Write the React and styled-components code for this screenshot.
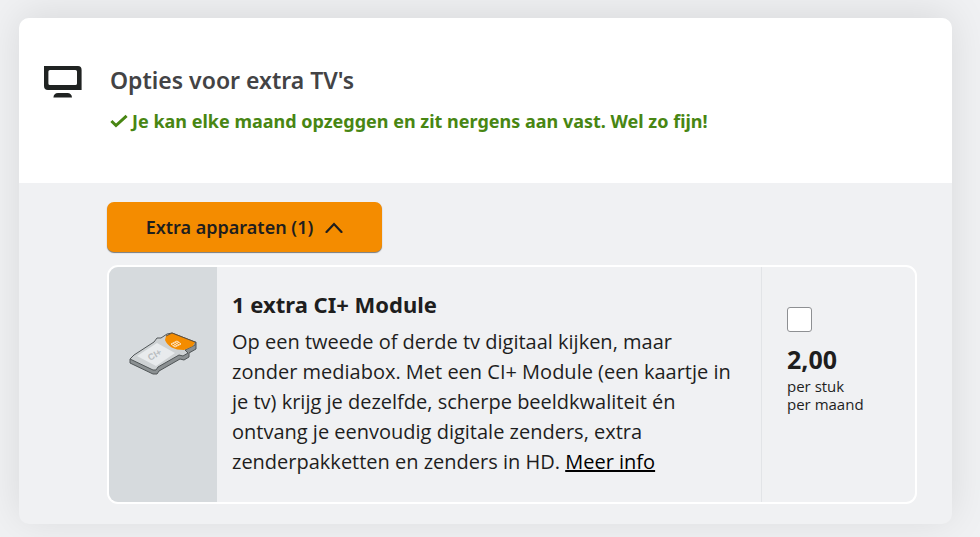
import React from "react";
import styled, { createGlobalStyle } from "styled-components";

const GlobalStyle = createGlobalStyle`
  *, *::before, *::after { box-sizing: border-box; }
  body {
    margin: 0;
    background: #f0f1f3;
    color: #1e1e1e;
    font-family: "Open Sans", "Noto Sans", sans-serif;
  }
`;

const Page = styled.main`
  padding: 18px 28px 13px 19px;
  overflow: hidden;
`;

const Card = styled.section`
  border-radius: 10px;
  background: #f0f1f3;
  box-shadow: 0 -4px 40px rgba(0, 0, 0, 0.1);
  overflow: hidden;
`;

const CardHeader = styled.header`
  display: grid;
  grid-template-columns: 39px 1fr;
  column-gap: 28px;
  align-items: start;
  min-height: 165px;
  padding: 44px 24px;
  background: #fff;
`;

const TvIcon = styled.svg`
  display: block;
  width: 39px;
  height: 32px;
  margin-top: 4px;
`;

const Title = styled.h2`
  margin: 0;
  color: #434345;
  font-family: "Noto Sans", sans-serif;
  font-size: 23px;
  font-weight: 600;
  line-height: 36px;
`;

const Benefit = styled.p`
  display: flex;
  align-items: center;
  gap: 4px;
  margin: 8px 0 0;
  color: #488613;
  font-family: "Noto Sans", sans-serif;
  font-size: 18px;
  font-weight: 700;
  line-height: 30px;
`;

const CheckIcon = styled.svg`
  flex: none;
  width: 18px;
  height: 14px;
`;

const CardBody = styled.div`
  padding: 19px 35px 20px 88px;
`;

const ToggleButton = styled.button`
  display: flex;
  align-items: center;
  justify-content: center;
  gap: 12px;
  width: 275px;
  height: 50px;
  border: 0;
  border-radius: 7px;
  background: #f48c00;
  box-shadow: 0 1px 1px #77797b;
  color: #1e1e1e;
  font-family: "Noto Sans", sans-serif;
  font-size: 18px;
  font-weight: 600;
  cursor: pointer;
`;

const ChevronIcon = styled.svg`
  width: 18px;
  height: 12px;
`;

const Option = styled.article`
  display: grid;
  grid-template-columns: 108px 1fr 154px;
  min-height: 239px;
  margin-top: 13px;
  border: 2px solid #fff;
  border-radius: 11px;
  overflow: hidden;
`;

const OptionMedia = styled.div`
  display: flex;
  justify-content: center;
  padding-top: 61px;
  background: #d6dadd;
`;

const ModuleArt = styled.svg`
  width: 74px;
  height: 50px;
`;

const OptionText = styled.div`
  padding: 20px 24px 24px 15px;
`;

const OptionTitle = styled.h3`
  margin: 0;
  font-family: "Noto Sans", sans-serif;
  font-size: 22px;
  font-weight: 700;
  line-height: 34px;
`;

const Description = styled.p`
  margin: 6px 0 0;
  font-size: 20px;
  line-height: 30px;
`;

const InfoLink = styled.a`
  color: #000;
  text-decoration: underline;
`;

const OptionPrice = styled.div`
  padding: 40px 24px 24px 25px;
  border-left: 1px solid #e2e4e7;
`;

const Checkbox = styled.input`
  appearance: none;
  display: block;
  width: 25px;
  height: 25px;
  margin: 0;
  border: 1px solid #8e9093;
  border-radius: 3px;
  background: #fff;
  &:checked { background: #488613; }
`;

const PriceLabel = styled.label`
  display: block;
  margin-top: 11px;
  font-size: 15px;
  line-height: 18px;
`;

const Amount = styled.strong`
  display: block;
  margin-bottom: 2px;
  font-family: "Noto Sans", sans-serif;
  font-size: 25px;
  font-weight: 700;
  line-height: 32px;
`;

const PriceUnit = styled.span`
  display: block;
`;

export default function App() {
  return (
    <>
      <GlobalStyle />
      <Page>
        <Card>
          <CardHeader>
            <TvIcon viewBox="0 0 39 32" aria-hidden="true">
              <path fill="#202322" fillRule="evenodd" d="M1 0H35Q38.6 0 38.6 4V24H5Q1 24 1 20ZM7 4Q5.4 4 5.4 5.6V17.4Q5.4 19 7 19H32.4Q34 19 34 17.4V5.6Q34 4 32.4 4Z" />
              <path fill="#202322" d="M10.4 31.6Q10.8 27 15 27H24.4Q28.6 27 29 31.6Z" />
            </TvIcon>
            <div>
              <Title>Opties voor extra TV's</Title>
              <Benefit>
                <CheckIcon viewBox="0 0 18 14" aria-hidden="true">
                  <path d="M1.4 7L6 11.5L16.6 1.8" fill="none" stroke="#488613" strokeWidth="3" />
                </CheckIcon>
                Je kan elke maand opzeggen en zit nergens aan vast. Wel zo fijn!
              </Benefit>
            </div>
          </CardHeader>
          <CardBody>
            <ToggleButton type="button" aria-expanded="true" aria-controls="extra-devices">
              Extra apparaten (1)
              <ChevronIcon viewBox="0 0 18 12" aria-hidden="true">
                <path d="M1.5 11L9 3L16.5 11" fill="none" stroke="#1e1e1e" strokeWidth="2.2" strokeLinecap="round" />
              </ChevronIcon>
            </ToggleButton>
            <Option id="extra-devices">
              <OptionMedia>
                <ModuleArt viewBox="0 0 74 50" aria-hidden="true">
                  <path d="M4 31V35L27 46L31 46L33 43L54 31L58 32L63 29V25L70 21V14L40 10Z" fill="#8b9092" stroke="#505557" strokeLinejoin="round" />
                  <path d="M4 31L8 27L28 14L31 10L35 10L41 6L46 5L69 14L69 17L59 22L62 25L57 28L53 27L32 39L30 42L27 42Z" fill="#ced2d4" stroke="#505557" strokeLinejoin="round" />
                  <path d="M11 28L31 15L49 25L30 38Z" fill="#e8ebed" />
                  <path d="M40 8L46 5L69 14L67 18L58 22Q43 22 39 12Z" fill="#f48c00" />
                  <path d="M40 8L46 5L69 14" fill="none" stroke="#665037" />
                  <path d="M45 16L51 13L55 16L49 19ZM47 15L51 18M49 14L53 17M47 18L53 14" fill="none" stroke="#ffe3bd" />
                  <text x="24" y="33" transform="rotate(-30 24 33)" fill="#b7bbbe" fontFamily="Liberation Sans, sans-serif" fontSize="9" fontWeight="700">CI+</text>
                </ModuleArt>
              </OptionMedia>
              <OptionText>
                <OptionTitle>1 extra CI+ Module</OptionTitle>
                <Description>
                  Op een tweede of derde tv digitaal kijken, maar zonder mediabox. Met een CI+ Module (een kaartje in je tv) krijg je dezelfde, scherpe beeldkwaliteit én ontvang je eenvoudig digitale zenders, extra zenderpakketten en zenders in HD. <InfoLink href="#meer-info">Meer info</InfoLink>
                </Description>
              </OptionText>
              <OptionPrice>
                <Checkbox type="checkbox" id="module-option" />
                <PriceLabel htmlFor="module-option">
                  <Amount>2,00</Amount>
                  <PriceUnit>per stuk</PriceUnit>
                  <PriceUnit>per maand</PriceUnit>
                </PriceLabel>
              </OptionPrice>
            </Option>
          </CardBody>
        </Card>
      </Page>
    </>
  );
}
